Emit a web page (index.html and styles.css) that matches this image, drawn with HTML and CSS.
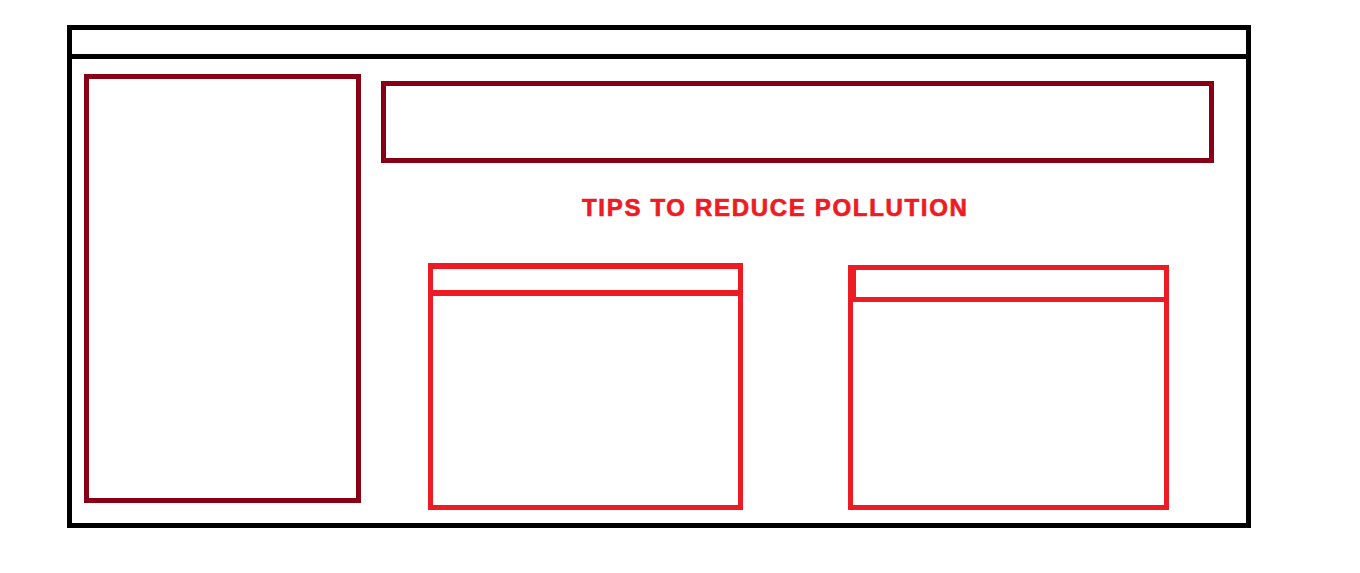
FILE: index.html
```html
<!DOCTYPE html>
<html lang="en">
<head>
    <meta charset="UTF-8">
    <meta name="viewport" content="width=device-width, initial-scale=1.0">
    <title>Pollution Tips - Wireframe</title>
    <link rel="stylesheet" href="styles.css">
</head>
<body>

    <div class="frame">
        <!-- Top bar -->
        <div class="topbar"></div>

        <div class="main">
            <!-- Side panel -->
            <div class="sidebar"></div>

            <div class="content">
                <!-- Banner -->
                <div class="banner"></div>

                <h1 class="title">TIPS TO REDUCE POLLUTION</h1>

                <!-- Tip cards -->
                <div class="cards">
                    <div class="card card-one">
                        <div class="card-head"></div>
                        <div class="card-body"></div>
                    </div>
                    <div class="card card-two">
                        <div class="card-head"></div>
                        <div class="card-body"></div>
                    </div>
                </div>
            </div>
        </div>
    </div>

</body>
</html>
```

FILE: styles.css
```css
* {
    box-sizing: border-box;
}
body {
    margin: 0;
    background: #fff;
    font-family: "Liberation Sans", Arial, sans-serif;
}
.frame {
    margin: 25px 0 0 67px;
    width: 1184px;
    height: 503px;
    border: 5px solid #000;
    display: flex;
    flex-direction: column;
}
.topbar {
    height: 29px;
    border-bottom: 5px solid #000;
}
.main {
    display: flex;
    align-items: flex-start;
}
.sidebar {
    margin: 15px 0 0 12px;
    width: 277px;
    height: 429px;
    border: 5px solid #880015;
}
.content {
    margin-left: 20px;
    width: 833px;
}
.banner {
    margin-top: 22px;
    height: 82px;
    border: 5px solid #880015;
}
.title {
    margin: 31px 0 0;
    padding-left: 201px;
    font-size: 24px;
    line-height: 28px;
    font-weight: bold;
    letter-spacing: 1.68px;
    color: #ed1c24;
    -webkit-text-stroke: 0.7px #ed1c24; /* paint-style heavy lettering */
}
.cards {
    display: flex;
    align-items: flex-start;
    margin-top: 41px;
    padding-left: 47px;
}
.card {
    border: 5px solid #ed1c24;
}
.card-one {
    width: 315px;
    height: 247px;
    border-top-width: 6px;
}
.card-one .card-head {
    height: 27px;
    border-bottom: 6px solid #ed1c24;
}
.card-two {
    margin: 2px 0 0 105px;
    width: 321px;
    height: 245px;
}
.card-two .card-head {
    height: 32px;
    border-bottom: 5px solid #ed1c24;
    border-left: 3px solid #ed1c24;
}
```
